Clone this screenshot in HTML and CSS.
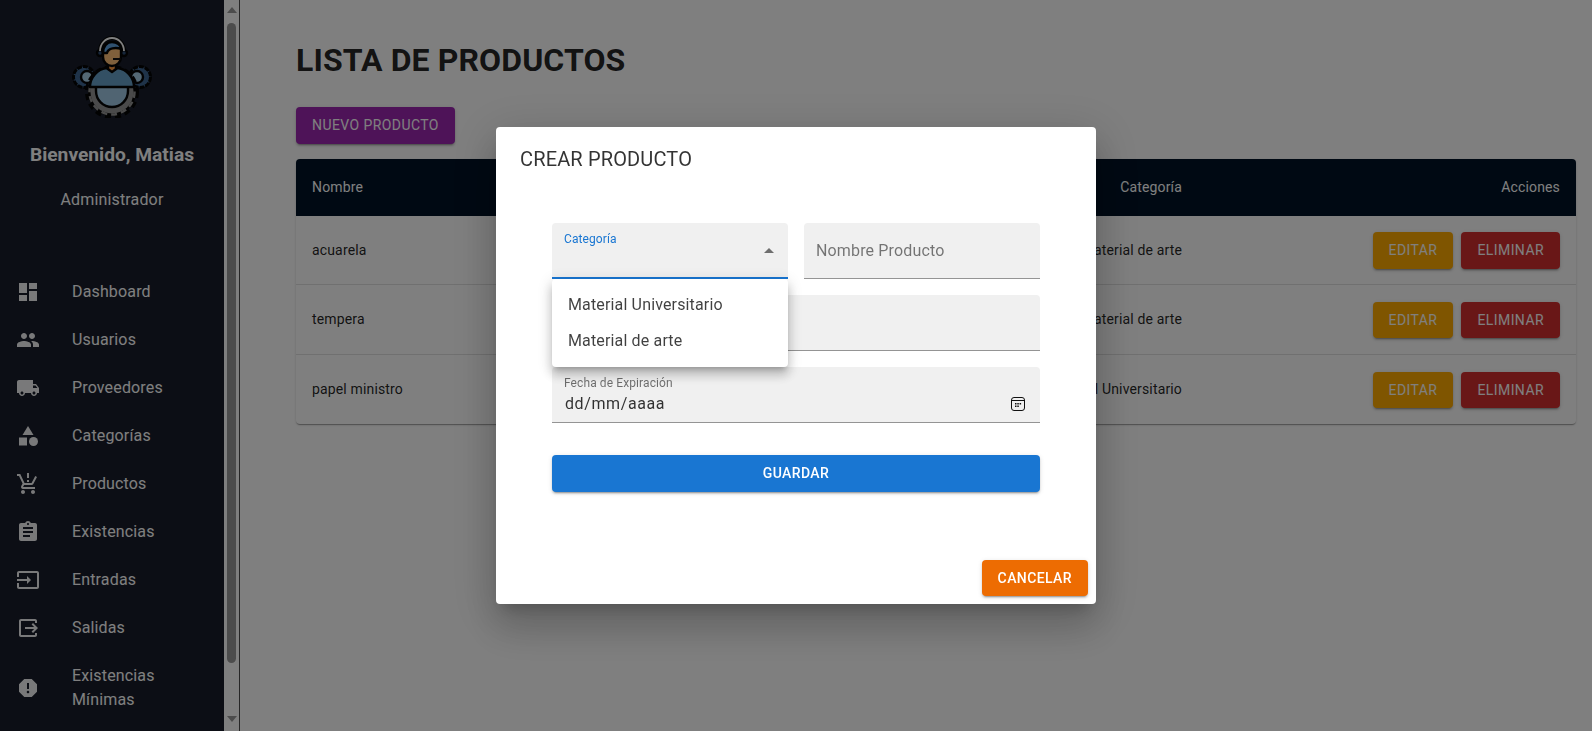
FILE: index.html
```html
<!DOCTYPE html>
<html lang="es">

<head>
    <meta charset="UTF-8">
    <meta name="viewport" content="width=device-width, initial-scale=1.0">
    <title>Lista de Productos</title>

    <link rel="stylesheet" href="styles.css">
</head>

<body>

    <div class="app">
        <aside class="sidebar">
            <div class="sidebar-content">
                <svg class="logo" viewBox="72 34 80 84" width="80" height="84">
                    <g stroke="#050505" stroke-width="2.4" stroke-linejoin="round">
                        <circle cx="84" cy="77" r="10.5" fill="#3e6692" stroke-width="3" stroke-dasharray="5 1"/>
                        <circle cx="140" cy="77" r="10.5" fill="#3e6692" stroke-width="3" stroke-dasharray="5 1"/>
                        <circle cx="87" cy="77" r="6" fill="#a8d0e8"/>
                        <circle cx="137" cy="77" r="6" fill="#a8d0e8"/>
                    </g>
                    <circle cx="112" cy="92" r="25" fill="none" stroke="#050505" stroke-width="4" stroke-dasharray="6 4"/>
                    <circle cx="112" cy="92" r="24" fill="#050505"/>
                    <circle cx="112" cy="92" r="21.5" fill="#949494"/>
                    <circle cx="112" cy="92" r="22.5" fill="none" stroke="#949494" stroke-width="2.5" stroke-dasharray="6 4"/>
                    <g stroke="#050505" stroke-width="2.4" stroke-linejoin="round">
                        <path d="M96 86h32v5a16 16 0 0 1-32 0z" fill="#a0c8e4"/>
                        <path d="M90 87c0-10 8-18 16-19l6 3 6-3c8 1 16 9 16 19z" fill="#66a0c8"/>
                        <circle cx="100" cy="53" r="3" fill="#2c4c74"/>
                        <circle cx="124" cy="53" r="3" fill="#2c4c74"/>
                        <path d="M108 64h8v5l-4 3-4-3z" fill="#ff9a40"/>
                        <path d="M103 47h18v10a9 9 0 0 1-18 0z" fill="#ffc178"/>
                        <path d="M103 53c0-7 4-11 9-11s9 3 9 7c-5-2-13-1-14 4z" fill="#5ea2e0"/>
                    </g>
                    <path d="M100 51a12 13 0 0 1 24 0" fill="none" stroke="#050505" stroke-width="4"/>
                    <path d="M100 51a12 13 0 0 1 24 0" fill="none" stroke="#fff" stroke-width="1.8"/>
                    <path d="M113 59h8" fill="none" stroke="#111" stroke-width="2"/>
                </svg>
                <h2 class="welcome">Bienvenido, Matias</h2>
                <p class="role">Administrador</p>

                <ul class="nav">
                    <li class="nav-item">
                        <svg class="nav-icon" viewBox="0 0 24 24"><path d="M3 13h8V3H3v10zm0 8h8v-6H3v6zm10 0h8V11h-8v10zm0-18v6h8V3h-8z"/></svg>
                        <span>Dashboard</span>
                    </li>
                    <li class="nav-item">
                        <svg class="nav-icon" viewBox="0 0 24 24"><path d="M16 11c1.66 0 2.99-1.34 2.99-3S17.66 5 16 5c-1.66 0-3 1.34-3 3s1.34 3 3 3zm-8 0c1.66 0 2.99-1.34 2.99-3S9.66 5 8 5C6.34 5 5 6.34 5 8s1.34 3 3 3zm0 2c-2.33 0-7 1.17-7 3.5V19h14v-2.5c0-2.33-4.67-3.5-7-3.5zm8 0c-.29 0-.62.02-.97.05 1.16.84 1.97 1.97 1.97 3.45V19h6v-2.5c0-2.33-4.67-3.5-7-3.5z"/></svg>
                        <span>Usuarios</span>
                    </li>
                    <li class="nav-item">
                        <svg class="nav-icon" viewBox="0 0 24 24"><path d="M20 8h-3V4H3c-1.1 0-2 .9-2 2v11h2c0 1.66 1.34 3 3 3s3-1.34 3-3h6c0 1.66 1.34 3 3 3s3-1.34 3-3h2v-5l-3-4zM6 18.5c-.83 0-1.5-.67-1.5-1.5s.67-1.5 1.5-1.5 1.5.67 1.5 1.5-.67 1.5-1.5 1.5zm13.5-9l1.96 2.5H17V9.5h2.5zm-1.5 9c-.83 0-1.5-.67-1.5-1.5s.67-1.5 1.5-1.5 1.5.67 1.5 1.5-.67 1.5-1.5 1.5z"/></svg>
                        <span>Proveedores</span>
                    </li>
                    <li class="nav-item">
                        <svg class="nav-icon" viewBox="0 0 24 24"><path d="M12 2l-5.5 9h11z"/><circle cx="17.5" cy="17.5" r="4.5"/><path d="M3 13.5h8v8H3z"/></svg>
                        <span>Categorías</span>
                    </li>
                    <li class="nav-item">
                        <svg class="nav-icon" viewBox="0 0 24 24"><path d="M13 10h-2V8h2v2zm0-4h-2V1h2v5zM7 18c-1.1 0-1.99.9-1.99 2S5.9 22 7 22s2-.9 2-2-.9-2-2-2zm10 0c-1.1 0-1.99.9-1.99 2s.89 2 1.99 2 2-.9 2-2-.9-2-2-2zm-8.9-5h7.45c.75 0 1.41-.41 1.75-1.03L21 4.96 19.25 4l-3.7 7H8.53L4.27 2H1v2h2l3.6 7.59-1.35 2.44C4.52 15.37 5.48 17 7 17h12v-2H7l1.1-2z"/></svg>
                        <span>Productos</span>
                    </li>
                    <li class="nav-item">
                        <svg class="nav-icon" viewBox="0 0 24 24"><path d="M19 3h-4.18C14.4 1.84 13.3 1 12 1c-1.3 0-2.4.84-2.82 2H5c-1.1 0-2 .9-2 2v14c0 1.1.9 2 2 2h14c1.1 0 2-.9 2-2V5c0-1.1-.9-2-2-2zm-7 0c.55 0 1 .45 1 1s-.45 1-1 1-1-.45-1-1 .45-1 1-1zm2 14H7v-2h7v2zm3-4H7v-2h10v2zm0-4H7V7h10v2z"/></svg>
                        <span>Existencias</span>
                    </li>
                    <li class="nav-item">
                        <svg class="nav-icon" viewBox="0 0 24 24"><path d="M21 3.01H3c-1.1 0-2 .9-2 2V9h2V4.99h18v14.03H3V15H1v4.01c0 1.1.9 1.98 2 1.98h18c1.1 0 2-.88 2-1.98v-14c0-1.11-.9-2-2-2zM11 16l4-4-4-4v3H1v2h10v3z"/></svg>
                        <span>Entradas</span>
                    </li>
                    <li class="nav-item">
                        <svg class="nav-icon" viewBox="0 0 24 24"><path d="M17 17l5-5-5-5-1.41 1.41L18.17 11H9v2h9.17l-2.58 2.59z"/><path d="M19 19H5V5h14v2h2V5c0-1.1-.89-2-2-2H5c-1.1 0-2 .9-2 2v14c0 1.1.9 2 2 2h14c1.1 0 2-.89 2-2v-2h-2v2z"/></svg>
                        <span>Salidas</span>
                    </li>
                    <li class="nav-item">
                        <svg class="nav-icon" viewBox="0 0 24 24"><path d="M15.73 3H8.27L3 8.27v7.46L8.27 21h7.46L21 15.73V8.27L15.73 3zM12 17.3c-.72 0-1.3-.58-1.3-1.3 0-.72.58-1.3 1.3-1.3.72 0 1.3.58 1.3 1.3 0 .72-.58 1.3-1.3 1.3zm1-4.3h-2V7h2v6z"/></svg>
                        <span>Existencias Mínimas</span>
                    </li>
                </ul>
            </div>

            <div class="scrollbar">
                <span class="scroll-arrow scroll-up"></span>
                <span class="scroll-thumb"></span>
                <span class="scroll-arrow scroll-down"></span>
            </div>
        </aside>

        <main class="main">
            <h1 class="page-title">LISTA DE PRODUCTOS</h1>
            <button class="btn btn-dim btn-purple">Nuevo Producto</button>

            <table class="products">
                <thead>
                    <tr>
                        <th>Nombre</th>
                        <th class="col-category">Categoría</th>
                        <th class="col-actions">Acciones</th>
                    </tr>
                </thead>
                <tbody>
                    <tr>
                        <td>acuarela</td>
                        <td class="col-category">Material de arte</td>
                        <td class="col-actions">
                            <div class="row-actions">
                                <button class="btn btn-dim btn-amber">Editar</button>
                                <button class="btn btn-dim btn-red">Eliminar</button>
                            </div>
                        </td>
                    </tr>
                    <tr>
                        <td>tempera</td>
                        <td class="col-category">Material de arte</td>
                        <td class="col-actions">
                            <div class="row-actions">
                                <button class="btn btn-dim btn-amber">Editar</button>
                                <button class="btn btn-dim btn-red">Eliminar</button>
                            </div>
                        </td>
                    </tr>
                    <tr>
                        <td>papel ministro</td>
                        <td class="col-category">Material Universitario</td>
                        <td class="col-actions">
                            <div class="row-actions">
                                <button class="btn btn-dim btn-amber">Editar</button>
                                <button class="btn btn-dim btn-red">Eliminar</button>
                            </div>
                        </td>
                    </tr>
                </tbody>
            </table>
        </main>
    </div>

    <div class="backdrop">
        <div class="dialog">
            <h2 class="dialog-title">CREAR PRODUCTO</h2>

            <form class="dialog-form">
                <div class="form-row">
                    <div class="field field-select">
                        <label class="field-label field-label-active">Categoría</label>
                        <span class="select-arrow"></span>
                        <ul class="select-menu">
                            <li>Material Universitario</li>
                            <li>Material de arte</li>
                        </ul>
                    </div>
                    <div class="field">
                        <input class="field-input" type="text" placeholder="Nombre Producto">
                    </div>
                </div>
                <div class="field"></div>
                <div class="field field-date">
                    <label class="field-label">Fecha de Expiración</label>
                    <span class="date-value">dd/mm/aaaa</span>
                    <svg class="date-icon" viewBox="0 0 14 14" width="14" height="14">
                        <rect x="0.5" y="0.5" width="13" height="13" rx="2.5" fill="none" stroke="#111"/>
                        <path d="M1 3.5h12" stroke="#111"/>
                        <path d="M4 6h1.5v1.5H4zM6.3 6h1.5v1.5H6.3zM8.6 6h1.5v1.5H8.6zM4 8.6h1.5v1.5H4zM6.3 8.6h1.5v1.5H6.3z" fill="#111"/>
                    </svg>
                </div>
                <button type="button" class="btn btn-blue">Guardar</button>
            </form>

            <div class="dialog-actions">
                <button type="button" class="btn btn-orange">Cancelar</button>
            </div>
        </div>
    </div>

</body>

</html>
```

FILE: styles.css
```css
* {
    box-sizing: border-box;
}

body {
    font-family: Roboto, "Liberation Sans", sans-serif;
    margin: 0;
    padding: 0;
    background-color: #fff;
    color: rgba(0, 0, 0, 0.87);
    overflow: hidden;
}

.app {
    display: flex;
    height: 100vh;
}

/* sidebar */

.sidebar {
    display: flex;
    width: 240px;
    flex-shrink: 0;
    height: 100%;
    border-right: 1px solid rgba(0, 0, 0, 0.7);
}

.sidebar-content {
    width: 224px;
    height: 100%;
    overflow: hidden;
    padding-top: 34px;
    background-color: #181d2b;
    color: #fff;
    text-align: center;
}

.logo {
    display: block;
    margin: 0 auto;
}

.welcome {
    font-size: 19.2px;
    font-weight: 700;
    line-height: 26px;
    margin: 24px 0 0;
}

.role {
    font-size: 16px;
    letter-spacing: 0.15px;
    line-height: 24px;
    margin: 20px 0 0;
}

.nav {
    list-style: none;
    margin: 56px 0 0;
    padding: 0;
    text-align: left;
}

.nav-item {
    display: flex;
    align-items: center;
    gap: 32px;
    padding: 12px 16px;
    font-size: 16px;
    letter-spacing: 0.15px;
    line-height: 24px;
}

.nav-icon {
    width: 24px;
    height: 24px;
    flex-shrink: 0;
    fill: #fff;
    opacity: 0.95;
}

.scrollbar {
    display: flex;
    flex-direction: column;
    align-items: center;
    width: 15px;
    height: 100%;
    background-color: #fff;
}

.scroll-thumb {
    width: 9px;
    height: 640px;
    margin-top: 10px;
    border-radius: 5px;
    background-color: #999;
}

.scroll-arrow {
    width: 0;
    height: 0;
    margin-top: 7px;
    border-left: 5px solid transparent;
    border-right: 5px solid transparent;
}

.scroll-up {
    border-bottom: 6px solid #999;
}

.scroll-down {
    margin: auto 0 9px;
    border-top: 6px solid #999;
}

/* page */

.main {
    flex: 1;
    padding: 40px 16px 0 56px;
}

.page-title {
    font-size: 32px;
    font-weight: 700;
    letter-spacing: 0.11px;
    line-height: 40px;
    margin: 0 0 27px;
}

.btn {
    font-family: inherit;
    font-size: 14px;
    font-weight: 500;
    line-height: 24.5px;
    letter-spacing: 0.4px;
    text-transform: uppercase;
    color: #fff;
    border: none;
    padding: 6px 16px;
    border-radius: 4px;
    box-shadow: 0 3px 1px -2px rgba(0, 0, 0, 0.2), 0 2px 2px 0 rgba(0, 0, 0, 0.14), 0 1px 5px 0 rgba(0, 0, 0, 0.12);
}

/* buttons behind the backdrop read lighter in the screenshot */
.btn-dim {
    font-weight: 400;
    letter-spacing: 0.42px;
}

.btn-purple {
    display: block;
    background-color: #9c27b0;
}

.btn-amber {
    background-color: #ffab00;
}

.btn-red {
    background-color: #d32f2f;
}

.btn-blue {
    display: block;
    width: 100%;
    margin-top: 16px;
    background-color: #1976d2;
}

.btn-orange {
    background-color: #ed6c02;
}

.products {
    width: 100%;
    margin-top: 15.5px;
    border-collapse: separate;
    border-spacing: 0;
    table-layout: fixed;
    font-size: 14px;
    letter-spacing: 0.15px;
    line-height: 24px;
    border-radius: 4px;
    box-shadow: 0 2px 1px -1px rgba(0, 0, 0, 0.2), 0 1px 1px 0 rgba(0, 0, 0, 0.14), 0 1px 3px 0 rgba(0, 0, 0, 0.12);
}

.products th {
    height: 56.5px;
    background-color: #001226;
    color: #fff;
    font-weight: 400;
    letter-spacing: 0.15px;
    text-align: left;
    padding: 16px;
}

.products th:first-child {
    border-top-left-radius: 4px;
}

.products th:last-child {
    border-top-right-radius: 4px;
}

.products td {
    height: 69.5px;
    padding: 0 16px;
    border-bottom: 1px solid #e0e0e0;
}

.products tbody tr:last-child td {
    border-bottom: none;
}

.products .col-category {
    width: 299px;
    text-align: right;
}

.products .col-actions {
    width: 378px;
    text-align: right;
}

.row-actions {
    display: flex;
    justify-content: flex-end;
    gap: 8px;
    padding-top: 1px;
}

/* dialog */

.backdrop {
    position: fixed;
    inset: 0;
    display: flex;
    align-items: center;
    justify-content: center;
    background-color: rgba(0, 0, 0, 0.5);
}

.dialog {
    display: flex;
    flex-direction: column;
    width: 600px;
    height: 477px;
    background-color: #fff;
    border-radius: 4px;
    box-shadow: 0 11px 15px -7px rgba(0, 0, 0, 0.2), 0 24px 38px 3px rgba(0, 0, 0, 0.14), 0 9px 46px 8px rgba(0, 0, 0, 0.12);
}

.dialog-title {
    font-size: 20px;
    font-weight: 400;
    letter-spacing: 0.15px;
    line-height: 32px;
    margin: 0;
    padding: 16px 24px;
    color: rgba(0, 0, 0, 0.8);
}

.dialog-form {
    display: flex;
    flex-direction: column;
    gap: 16px;
    width: 488px;
    margin: 32px auto 0;
}

.form-row {
    display: flex;
    gap: 16px;
}

.form-row .field {
    flex: 1;
}

.field {
    position: relative;
    height: 56px;
    background-color: #f0f0f0;
    border-radius: 4px 4px 0 0;
    border-bottom: 1px solid #949494;
}

.field-select {
    border-bottom: 2px solid #1976d2;
}

.field-input {
    width: 100%;
    height: 100%;
    padding: 0 12px;
    border: none;
    outline: none;
    background: transparent;
    font-family: inherit;
    font-size: 16px;
    letter-spacing: 0.15px;
}

.field-input::placeholder {
    color: rgba(0, 0, 0, 0.52);
    opacity: 1;
}

.field-label {
    display: block;
    padding: 9px 12px 0;
    font-size: 12px;
    letter-spacing: 0.1px;
    line-height: 14px;
    color: rgba(0, 0, 0, 0.55);
}

.field-label-active {
    color: #1976d2;
}

.select-arrow {
    position: absolute;
    top: 25px;
    right: 14px;
    width: 0;
    height: 0;
    border-left: 5px solid transparent;
    border-right: 5px solid transparent;
    border-bottom: 5px solid rgba(0, 0, 0, 0.54);
}

.select-menu {
    position: absolute;
    top: 56px;
    left: 0;
    z-index: 2;
    width: 100%;
    list-style: none;
    margin: 0;
    padding: 8px 0;
    background-color: #fff;
    border-radius: 4px;
    color: rgba(0, 0, 0, 0.75);
    font-size: 16px;
    letter-spacing: 0.15px;
    line-height: 36px;
    box-shadow: 0 5px 5px -3px rgba(0, 0, 0, 0.2), 0 8px 10px 1px rgba(0, 0, 0, 0.14), 0 3px 14px 2px rgba(0, 0, 0, 0.12);
}

.select-menu li {
    padding: 0 16px;
}

.date-value {
    display: block;
    padding: 3px 13px 0;
    font-size: 16px;
    line-height: 22px;
    letter-spacing: 0.6px;
    color: rgba(0, 0, 0, 0.8);
}

.date-icon {
    position: absolute;
    top: 30px;
    right: 15px;
}

.dialog-actions {
    display: flex;
    justify-content: flex-end;
    margin-top: auto;
    padding: 8px;
}
```
